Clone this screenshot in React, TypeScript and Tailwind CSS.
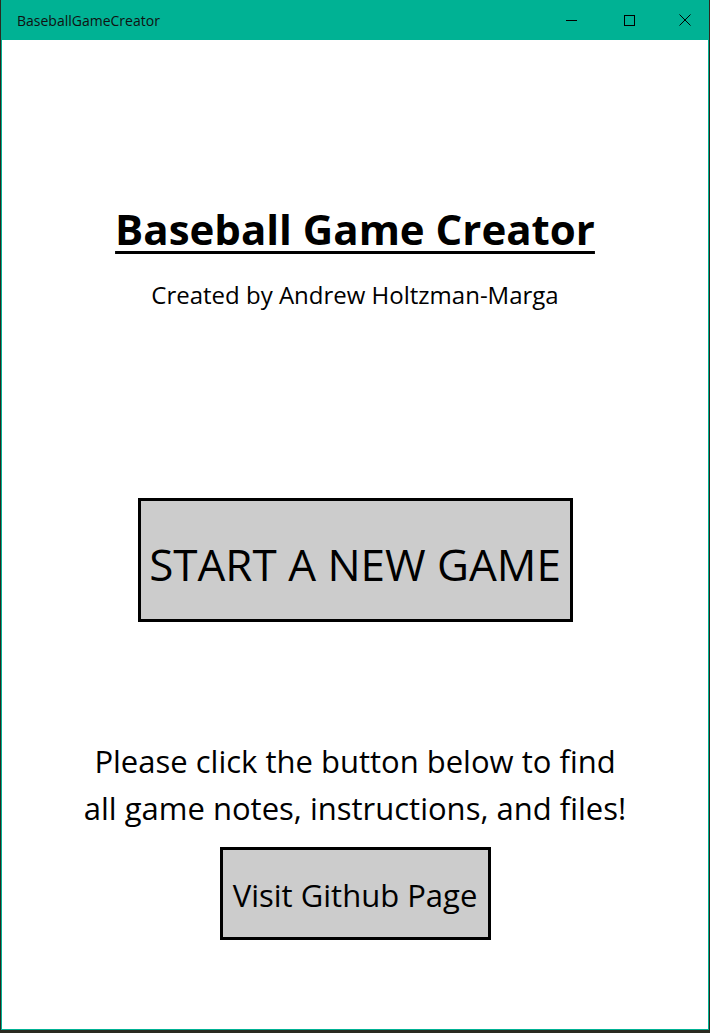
import React from "react";

export default function App() {
  return (
    <div className="h-[1033px] w-[710px] overflow-hidden bg-[#2a2a20]">
      <div
        className="ml-[1px] flex h-[1030px] w-[708px] flex-col border border-t-0 border-[#00b294] bg-white"
        style={{ fontFamily: '"Open Sans", "Noto Sans", sans-serif' }}
      >
        {/* title bar */}
        <div className="flex h-[40px] shrink-0 items-center bg-[#00b294] pl-[15px] text-[14px] text-[#111]">
          <span className="flex-1">BaseballGameCreator</span>
          <div className="flex h-full items-center">
            <div className="flex h-full w-[46px] items-center justify-center">
              <div className="h-[1px] w-[11px] bg-black" />
            </div>
            <div className="ml-[12px] flex h-full w-[46px] items-center justify-center">
              <div className="h-[11px] w-[11px] border border-black" />
            </div>
            <div className="ml-[10px] flex h-full w-[46px] items-center justify-center">
              <svg width="12" height="12" viewBox="0 0 12 12">
                <path d="M0.5 0.5 L11.5 11.5 M11.5 0.5 L0.5 11.5" stroke="black" strokeWidth="1" />
              </svg>
            </div>
          </div>
        </div>

        {/* content */}
        <div className="flex flex-col items-center text-black">
          <div className="mt-[156px] flex h-[64px] items-center">
            <h1 className="text-[42px] font-bold underline decoration-[3px] underline-offset-[6px]">
              Baseball Game Creator
            </h1>
          </div>
          <div className="mt-[15px] flex h-[40px] items-center text-[24px]">Created by Andrew Holtzman-Marga</div>

          <button className="mt-[183px] flex h-[124px] w-[435px] shrink-0 items-center justify-center border-[3px] border-black bg-[#cccccc] pt-[8px] text-[44px]">
            START A NEW GAME
          </button>

          <div className="mt-[116px] flex flex-col items-center text-[31px] leading-[47px]">
            <span>Please click the button below to find</span>
            <span>all game notes, instructions, and files!</span>
          </div>

          <button className="mt-[15px] flex h-[93px] w-[271px] shrink-0 items-center justify-center border-[3px] border-black bg-[#cccccc] pt-[3px] text-[31px]">
            Visit Github Page
          </button>
        </div>
      </div>
    </div>
  );
}
